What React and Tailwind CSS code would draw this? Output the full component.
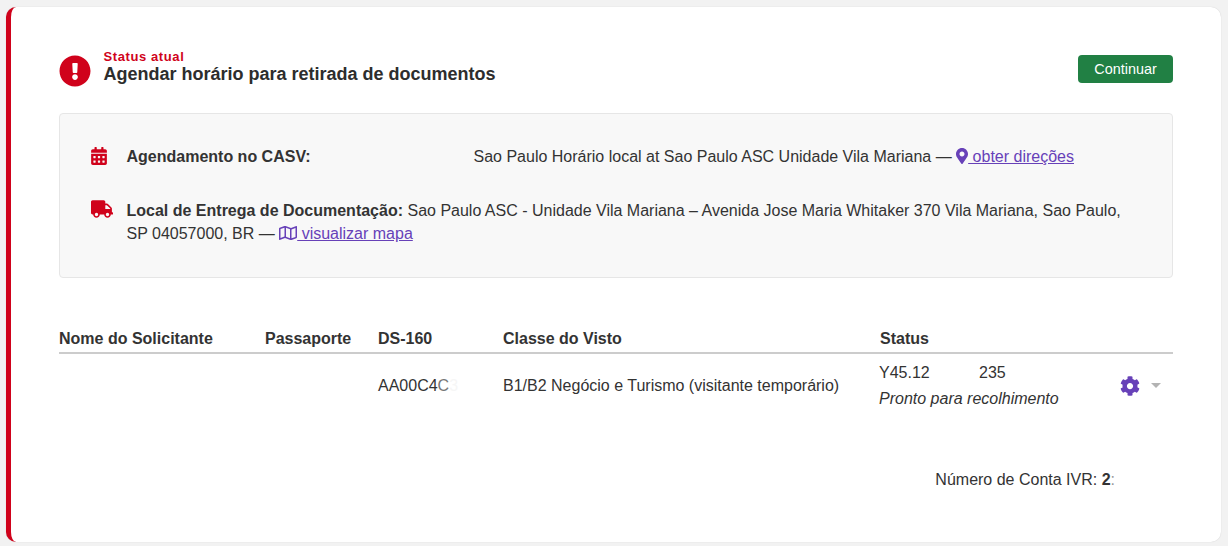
import React from "react";
import { FaExclamationCircle, FaCalendarAlt, FaTruck, FaMapMarkerAlt, FaRegMap, FaCog } from "react-icons/fa";

export default function App() {
  return (
    <div className="min-h-[546px] bg-[#f2f2f2] pt-[7px] pl-[6px] pr-[7px] pb-[4px] font-['Liberation_Sans',Arial,sans-serif] text-[16px] leading-[23px] text-[#333333]">
      <div className="h-[535px] rounded-[10px] border-l-[5px] border-l-[#d0021b] bg-white px-[48px] pt-[43px] shadow-[0_0_1px_rgba(0,0,0,0.2)]">
        <div className="flex items-center justify-between h-[40px]">
          <div className="flex items-center">
            <FaExclamationCircle className="h-[32px] w-[32px] text-[#d0021b] mt-[2px]" />
            <div className="ml-[12.5px] pb-[5px]">
              <div className="text-[13px] leading-[12px] font-bold tracking-[0.6px] text-[#d0021b]">Status atual</div>
              <div className="mt-[1px] text-[18px] leading-[20px] font-bold text-[#2d2d2d]">Agendar horário para retirada de documentos</div>
            </div>
          </div>
          <button className="mt-[-2px] h-[28px] w-[95px] rounded-[4px] bg-[#218044] text-[14.4px] text-white">Continuar</button>
        </div>

        <div className="mt-[23px] h-[165px] rounded-[4px] border border-[#e6e6e6] bg-[#f8f8f8] pl-[31px] pr-[40px] pt-[31px]">
          <div className="flex">
            <FaCalendarAlt className="mt-[2px] h-[18px] w-[16px] text-[#d0021b]" />
            <div className="ml-[19.5px] flex">
              <span className="w-[347px] font-bold">Agendamento no CASV:</span>
              <span>
                Sao Paulo Horário local at Sao Paulo ASC Unidade Vila Mariana —{" "}
                <a className="text-[#6741b8] underline">
                  <FaMapMarkerAlt className="inline h-[16px] w-[12px] align-[-2px]" /> obter direções
                </a>
              </span>
            </div>
          </div>
          <div className="mt-[31px] flex">
            <FaTruck className="mt-[1px] h-[18px] w-[22px] shrink-0 text-[#d0021b]" />
            <div className="ml-[13.5px]">
              <span className="font-bold">Local de Entrega de Documentação:</span> Sao Paulo ASC - Unidade Vila Mariana – Avenida Jose Maria Whitaker 370 Vila Mariana, Sao Paulo, SP 04057000, BR —{" "}
              <a className="text-[#6741b8] underline">
                <FaRegMap className="inline h-[16px] w-[18px] align-[-2px]" /> visualizar mapa
              </a>
            </div>
          </div>
        </div>

        <table className="mt-[47px] w-full table-fixed border-collapse">
          <thead>
            <tr className="h-[28px] border-b-2 border-[#cccccc] text-left">
              <th className="w-[206px] p-0 font-bold">Nome do Solicitante</th>
              <th className="w-[113px] p-0 font-bold">Passaporte</th>
              <th className="w-[125px] p-0 font-bold">DS-160</th>
              <th className="w-[377px] p-0 font-bold">Classe do Visto</th>
              <th className="p-0 font-bold">Status</th>
              <th className="w-[73px] p-0"></th>
            </tr>
          </thead>
          <tbody>
            <tr className="h-[64px]">
              <td className="p-0"></td>
              <td className="p-0"></td>
              <td className="p-0">
                AA00C4<span className="text-[#777777]">C</span>
                <span className="text-[#f6f6f6]">3</span>
              </td>
              <td className="p-0">B1/B2 Negócio e Turismo (visitante temporário)</td>
              <td className="p-0">
                <div className="ml-[-1px] flex">
                  <span className="w-[100px]">Y45.12</span>
                  <span>235</span>
                </div>
                <div className="ml-[-1px] mt-[3px] italic whitespace-nowrap">Pronto para recolhimento</div>
              </td>
              <td className="p-0">
                <div className="flex items-center pl-[20px]">
                  <FaCog className="h-[20px] w-[20px] text-[#6741b8]" />
                  <span className="ml-[11px] h-0 w-0 border-x-[5px] border-t-[5px] border-x-transparent border-t-[#b3b3b3]"></span>
                </div>
              </td>
            </tr>
          </tbody>
        </table>

        <div className="mt-[51px] flex justify-end pr-[58px]">
          <span>
            Número de Conta IVR: <b>2</b><span className="text-[#999999]">:</span>
          </span>
        </div>
      </div>
    </div>
  );
}
